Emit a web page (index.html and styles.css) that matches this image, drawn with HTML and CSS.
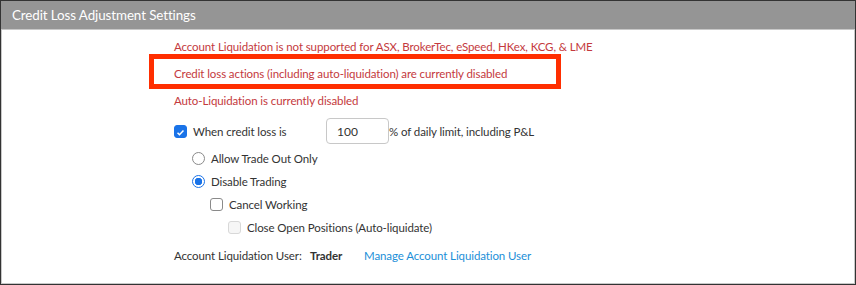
FILE: index.html
```html
<!DOCTYPE html>
<html lang="en">
<head>
    <meta charset="UTF-8">
    <title>Credit Loss Adjustment Settings</title>
    <link rel="stylesheet" href="styles.css">
</head>
<body>
    <div class="panel">
        <div class="panel-header">Credit Loss Adjustment Settings</div>
        <div class="panel-body">
            <div class="msg">Account Liquidation is not supported for ASX, BrokerTec, eSpeed, HKex, KCG, &amp; LME</div>
            <div class="msg msg-flagged">Credit loss actions (including auto-liquidation) are currently disabled</div>
            <div class="msg">Auto-Liquidation is currently disabled</div>

            <div class="row row-limit">
                <span class="check checked">
                    <svg viewBox="0 0 13 13" width="13" height="13"><path d="M3 6.8l2.3 2.3L10 4.2" fill="none" stroke="#fff" stroke-width="1.8"/></svg>
                </span>
                <span class="label-fixed">When credit loss is</span>
                <input class="limit-input" type="text" value="100">
                <span>% of daily limit, including P&amp;L</span>
            </div>

            <div class="row indent-1 first-option">
                <span class="radio"></span>
                <span>Allow Trade Out Only</span>
            </div>
            <div class="row indent-1">
                <span class="radio selected"></span>
                <span>Disable Trading</span>
            </div>
            <div class="row indent-2">
                <span class="check"></span>
                <span>Cancel Working</span>
            </div>
            <div class="row indent-3">
                <span class="check disabled"></span>
                <span>Close Open Positions (Auto-liquidate)</span>
            </div>

            <div class="row row-user">
                <span class="user-label">Account Liquidation User:</span>
                <span class="user-name">Trader</span>
                <a class="user-link" href="#">Manage Account Liquidation User</a>
            </div>
        </div>
    </div>
</body>
</html>
```

FILE: styles.css
```css
body {
    margin: 0;
    font-family: Lato, "Open Sans", sans-serif;
    font-size: 11.5px;
    letter-spacing: -0.1px;
    color: #333;
    background: #fff;
}

.panel {
    width: 856px;
    height: 285px;
    box-sizing: border-box;
    border: 1px solid #333;
    box-shadow: inset 0 0 0 1px #c8c8c8;
    position: relative;
}

.panel-header {
    height: 28px;
    line-height: 28px;
    background: #959595;
    color: #fff;
    font-size: 13.4px;
    padding-left: 11px;
    border-bottom: 1px solid #c8c8c8;
}

.panel-body {
    padding: 9px 0 0 173px;
    position: relative;
}

.msg {
    color: #c4393d;
    height: 27px;
    line-height: 16px;
}

.msg-flagged {
    position: relative;
}

/* highlight annotation drawn over the message */
.msg-flagged::after {
    content: "";
    position: absolute;
    left: -25px;
    top: -12px;
    width: 402px;
    height: 25px;
    border: 5px solid #ff2e00;
}

.row {
    display: flex;
    align-items: center;
    height: 23px;
    white-space: nowrap;
}

.row-limit {
    margin-top: -3px;
    height: 28px;
}

.label-fixed {
    width: 133px;
}

.limit-input {
    width: 63px;
    height: 26px;
    box-sizing: border-box;
    border: 1px solid #c8c8c8;
    border-radius: 4px;
    padding: 0 10px;
    font-family: inherit;
    font-size: 12px;
    color: #333;
}

.indent-1 { padding-left: 18px; }
.indent-2 { padding-left: 36px; }
.indent-3 { padding-left: 54px; height: 22px; }

.first-option { margin-top: 2px; }

.check {
    width: 13px;
    height: 13px;
    box-sizing: border-box;
    border: 1px solid #8a8a8a;
    border-radius: 3px;
    margin-right: 6px;
    display: flex;
    flex-shrink: 0;
}

.check.checked {
    background: #1a73e8;
    border-color: #1a73e8;
}

.check.disabled {
    border-color: #d8d8d8;
    background: #f6f6f6;
}

.radio {
    width: 13px;
    height: 13px;
    box-sizing: border-box;
    border: 1px solid #8a8a8a;
    border-radius: 50%;
    margin-right: 6px;
    flex-shrink: 0;
}

.radio.selected {
    border: 1px solid #1a73e8;
    background: radial-gradient(circle, #1a73e8 0 3.5px, #fff 4px);
}

.row-user {
    margin-top: 5px;
    height: 24px;
}

.user-label {
    width: 136px;
}

.user-name {
    font-weight: bold;
    width: 56px;
    margin-right: -2px;
}

.user-link {
    color: #1b8fd8;
    text-decoration: none;
}
```
